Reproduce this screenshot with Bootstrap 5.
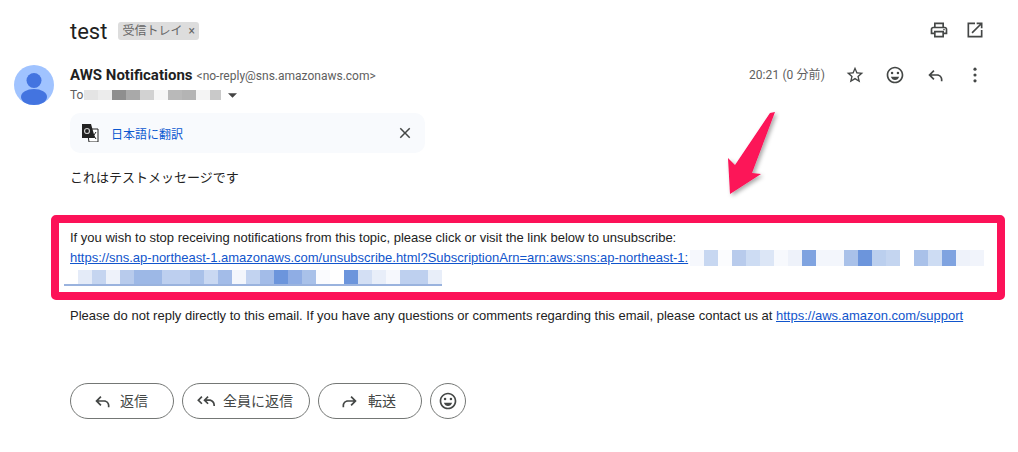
<!doctype html>
<html lang="ja">
<head>
<meta charset="utf-8">
<title>test</title>
<link href="https://cdn.jsdelivr.net/npm/bootstrap@5.3.0/dist/css/bootstrap.min.css" rel="stylesheet">
<style>
html,body{height:452px;overflow:hidden;background:#fff;}
body{font-family:"Roboto","Noto Sans CJK JP",sans-serif;color:#1f1f1f;font-size:14px;position:relative;}
svg{display:block;}
.mail-shell{padding:0 0 0 14px;}
.subject-row{height:60px;padding:0 33px 0 56px;}
.subject-text{font-size:22px;line-height:28px;margin:3px 11px 0 0;color:#1f1f1f;}
.tray-chip{background:#ddd;color:#666;font-size:12px;line-height:16px;border-radius:3px;padding:1px 4px 1px 4px;height:18px;margin-top:2px;}
.tray-x{font-size:12px;margin-left:6px;}
.act-ico{width:20px;height:20px;color:#444746;flex:none;}
.head-row{height:45px;padding-right:33px;}
.avatar-box{width:40px;height:40px;margin-top:5px;margin-right:16px;flex:none;}
.sender-block{padding-top:5px;}
.sender-name{font-weight:700;font-size:15px;line-height:20px;}
.sender-mail{font-size:12px;color:#5e5e5e;margin-left:4px;}
.recip-row{font-size:12px;color:#5e5e5e;line-height:16px;margin-top:2px;}
.recip-mosaic{margin-left:1px;}
.recip-caret{margin-left:6px;}
.time-text{font-size:12px;line-height:20px;letter-spacing:.1px;color:#5e5e5e;margin-right:20px;}
.head-tools{padding-top:5px;}
.head-icons{gap:20px;}
.translate-bar{width:355px;height:40px;margin:8px 0 0 56px;background:#f8fafd;border-radius:10px;padding:0 11px 0 11px;}
.translate-link{color:#0b57d0;font-size:12px;margin:3px 0 0 12px;text-decoration:none;}
.body-jp{margin:15px 0 0 56px;font-size:13px;line-height:20px;color:#222;}
.notice-frame{width:954px;height:85px;margin:27px 0 0 37px;border:8px solid #fc1258;border-radius:5px;padding:5px 11px 0;}
.mail-text{font-family:"Liberation Sans",Arial,sans-serif;font-size:13px;line-height:20px;color:#222;white-space:nowrap;}
.mail-text a{color:#1155cc;}
.mosaic-inline{display:inline-block;vertical-align:-4px;margin-left:2px;}
.mosaic-wrap{margin:2px 0 0 -6px;}
.footer-text{margin:6px 0 0 56px;}
.reply-row{margin:57px 0 0 56px;gap:8px;}
.pill-btn{height:36px;border:1px solid #747775;border-radius:18px;background:#fff;color:#444746;font-size:14px;line-height:20px;padding:0 4px 0 0;display:flex;align-items:center;justify-content:center;gap:8px;}
.pill-reply{width:104px;}
.pill-all{width:128px;}
.pill-fwd{width:104px;}
.pill-emoji{width:36px;padding:0;}
.arrow-over{position:absolute;left:726px;top:108px;}
</style>
</head>
<body>
<div class="mail-shell">
  <div class="subject-row d-flex align-items-center">
    <span class="subject-text">test</span>
    <span class="tray-chip d-inline-flex align-items-center">受信トレイ<span class="tray-x">×</span></span>
    <div class="ms-auto d-flex gap-3">
      <svg class="act-ico" viewBox="0 0 24 24" fill="currentColor"><path d="M19 8h-1V3H6v5H5c-1.66 0-3 1.34-3 3v6h4v4h12v-4h4v-6c0-1.66-1.34-3-3-3zM8 5h8v3H8V5zm8 14H8v-4h8v4zm2-4v-2H6v2H4v-4c0-.55.45-1 1-1h14c.55 0 1 .45 1 1v4h-2z"/><circle cx="18" cy="11.5" r="1"/></svg>
      <svg class="act-ico" viewBox="0 0 24 24" fill="currentColor"><path d="M19 19H5V5h7V3H3v18h18v-9h-2v7zM14 3v2h3.59l-9.83 9.83 1.41 1.41L19 6.41V10h2V3h-7z"/></svg>
    </div>
  </div>
  <div class="head-row d-flex">
    <svg class="avatar-box" viewBox="0 0 40 40"><circle cx="20" cy="20" r="20" fill="#a0c3ff"/><circle cx="20" cy="15.5" r="7.5" fill="#4374e0"/><ellipse cx="20" cy="32" rx="13" ry="8" fill="#4374e0"/></svg>
    <div class="sender-block">
      <div class="d-flex align-items-baseline"><span class="sender-name">AWS Notifications</span><span class="sender-mail">&lt;no-reply@sns.amazonaws.com&gt;</span></div>
      <div class="recip-row d-flex align-items-center">To
        <svg class="recip-mosaic" width="138" height="10" viewBox="0 0 138 10"><rect x="0" width="14" height="10" fill="#e4e4e4"/><rect x="14" width="14" height="10" fill="#ececec"/><rect x="28" width="14" height="10" fill="#8e8e8e"/><rect x="42" width="14" height="10" fill="#a9a9a9"/><rect x="56" width="14" height="10" fill="#d2d2d2"/><rect x="70" width="14" height="10" fill="#f6f6f6"/><rect x="84" width="14" height="10" fill="#b9b9b9"/><rect x="98" width="14" height="10" fill="#b4b4b4"/><rect x="112" width="14" height="10" fill="#f4f4f4"/><rect x="126" width="11" height="10" fill="#c9c9c9"/></svg>
        <svg class="recip-caret" width="9" height="5" viewBox="0 0 10 5"><path d="M0 0h10L5 5z" fill="#444"/></svg>
      </div>
    </div>
    <div class="ms-auto d-flex align-items-start head-tools">
      <span class="time-text">20:21 (0 分前)</span>
      <div class="d-flex head-icons">
        <svg class="act-ico" viewBox="0 0 24 24" fill="currentColor"><path d="M22 9.24l-7.19-.62L12 2 9.19 8.63 2 9.24l5.46 4.73L5.82 21 12 17.27 18.18 21l-1.63-7.03L22 9.24zM12 15.4l-3.76 2.27 1-4.28-3.32-2.88 4.38-.38L12 6.1l1.71 4.04 4.38.38-3.32 2.88 1 4.28L12 15.4z"/></svg>
        <svg class="act-ico" viewBox="0 0 24 24" fill="currentColor"><path d="M12 2C6.48 2 2 6.48 2 12s4.48 10 10 10 10-4.48 10-10S17.52 2 12 2zm0 18c-4.41 0-8-3.59-8-8s3.59-8 8-8 8 3.59 8 8-3.59 8-8 8z"/><circle cx="15.5" cy="9.5" r="1.5"/><circle cx="8.5" cy="9.5" r="1.5"/><path d="M12 18c2.28 0 4.22-1.66 5-4H7c.78 2.34 2.72 4 5 4z"/></svg>
        <svg class="act-ico" viewBox="0 0 24 24" fill="currentColor"><path d="M21 17.5v2h-2v-2c0-2.5-2-4.5-4.5-4.5H7.83l3.58 3.59L10 18l-6-6 6-6 1.41 1.41L7.83 11h6.67c3.6 0 6.5 2.9 6.5 6.500z"/></svg>
        <svg class="act-ico" viewBox="0 0 24 24" fill="currentColor"><circle cx="12" cy="5" r="1.900"/><circle cx="12" cy="12" r="1.900"/><circle cx="12" cy="19" r="1.900"/></svg>
      </div>
    </div>
  </div>
  <div class="translate-bar d-flex align-items-center">
    <svg width="18" height="18" viewBox="0 0 18 18"><path d="M6 5h11v13H8z" fill="#fff" stroke="#222" stroke-width="1"/><path d="M1 0h9l4 14H1z" fill="#222"/><circle cx="6" cy="7" r="2.500" fill="none" stroke="#ccc" stroke-width="1.200"/><path d="M11 9l4 6M15 8l-4 6" stroke="#222" stroke-width="1" fill="none"/></svg>
    <a class="translate-link" href="#">日本語に翻訳</a>
    <svg class="ms-auto" width="18" height="18" viewBox="0 0 24 24" fill="#444746"><path d="M19 6.410L17.590 5 12 10.590 6.410 5 5 6.410 10.590 12 5 17.590 6.410 19 12 13.410 17.590 19 19 17.590 13.410 12z"/></svg>
  </div>
  <div class="body-jp">これはテストメッセージです</div>
  <div class="notice-frame mail-text">
    <div>If you wish to stop receiving notifications from this topic, please click or visit the link below to unsubscribe:</div>
    <div><a href="#">https://sns.ap-northeast-1.amazonaws.com/unsubscribe.html?SubscriptionArn=arn:aws:sns:ap-northeast-1:</a><svg class="mosaic-inline" width="296" height="16" viewBox="0 0 296 16"><rect width="14" height="16" fill="#f6f8fd"/><rect x="14" width="14" height="16" fill="#c7d7f1"/><rect x="28" width="14" height="16" fill="#fbfcfe"/><rect x="42" width="14" height="16" fill="#b8cbec"/><rect x="56" width="14" height="16" fill="#cddcf3"/><rect x="70" width="14" height="16" fill="#dce6f6"/><rect x="84" width="14" height="16" fill="#f7f9fd"/><rect x="98" width="14" height="16" fill="#eef2fa"/><rect x="112" width="14" height="16" fill="#7fa3e0"/><rect x="126" width="14" height="16" fill="#f3f6fc"/><rect x="140" width="14" height="16" fill="#f3f6fc"/><rect x="154" width="14" height="16" fill="#a9c1e9"/><rect x="168" width="14" height="16" fill="#6c95dc"/><rect x="182" width="14" height="16" fill="#bbcfee"/><rect x="196" width="14" height="16" fill="#c4d5f0"/><rect x="210" width="14" height="16" fill="#fff"/><rect x="224" width="14" height="16" fill="#a9c1e9"/><rect x="238" width="14" height="16" fill="#cddcf3"/><rect x="252" width="14" height="16" fill="#7fa3e0"/><rect x="266" width="14" height="16" fill="#eef2fa"/><rect x="280" width="14" height="16" fill="#f1f4fb"/></svg></div>
    <svg class="mosaic-wrap" width="380" height="16" viewBox="0 0 380 16"><rect x="0" y="14" width="378" height="2" fill="#9ab3de"/><rect x="14" width="14" height="14" fill="#e4ebf8"/><rect x="28" width="14" height="14" fill="#c5d5f0"/><rect x="42" width="14" height="14" fill="#eef2fa"/><rect x="56" width="14" height="14" fill="#b8cbec"/><rect x="70" width="28" height="14" fill="#9db8e6"/><rect x="98" width="28" height="14" fill="#bdcfef"/><rect x="126" width="14" height="14" fill="#a9c1e9"/><rect x="140" width="14" height="14" fill="#c9d8f2"/><rect x="154" width="14" height="14" fill="#a3bce8"/><rect x="168" width="14" height="14" fill="#f3f6fc"/><rect x="182" width="14" height="14" fill="#c2d3f0"/><rect x="196" width="14" height="14" fill="#a3bce8"/><rect x="210" width="14" height="14" fill="#6c95dc"/><rect x="224" width="14" height="14" fill="#8fade4"/><rect x="238" width="14" height="14" fill="#a9c1e9"/><rect x="252" width="14" height="14" fill="#fafbfe"/><rect x="266" width="14" height="14" fill="#fff"/><rect x="280" width="14" height="14" fill="#6c95dc"/><rect x="294" width="14" height="14" fill="#d3dff4"/><rect x="308" width="14" height="14" fill="#e8eef9"/><rect x="322" width="14" height="14" fill="#f6f8fd"/><rect x="336" width="28" height="14" fill="#bed0ef"/><rect x="364" width="14" height="14" fill="#e8eef9"/></svg>
  </div>
  <div class="footer-text mail-text">Please do not reply directly to this email. If you have any questions or comments regarding this email, please contact us at <a href="#">https://aws.amazon.com/support</a></div>
  <div class="reply-row d-flex">
    <button class="btn pill-btn pill-reply"><svg width="20" height="20" viewBox="0 0 24 24" fill="#444746"><path d="M21 17.500v2h-2v-2c0-2.500-2-4.500-4.500-4.500H7.830l3.580 3.590L10 18l-6-6 6-6 1.410 1.410L7.830 11h6.670c3.600 0 6.500 2.900 6.500 6.500z"/></svg>返信</button>
    <button class="btn pill-btn pill-all"><svg width="20" height="20" viewBox="0 0 24 24" fill="#444746"><path d="M22 18v-1c0-2.760-2.240-5-5-5h-3.170l2.580 2.590L15 16l-5-5 5-5 1.410 1.410L13.830 10H17c3.870 0 7 3.130 7 7v1z"/><path d="M9 7.410L7.590 6l-5 5 5 5L9 14.590 5.410 11z"/></svg>全員に返信</button>
    <button class="btn pill-btn pill-fwd"><svg width="20" height="20" viewBox="0 0 24 24" fill="#444746"><path d="M3 17.500v2h2v-2c0-2.500 2-4.500 4.500-4.500h6.670l-3.580 3.590L14 18l6-6-6-6-1.410 1.410L16.170 11H9.500C5.900 11 3 13.900 3 17.500z"/></svg>転送</button>
    <button class="btn pill-btn pill-emoji"><svg width="20" height="20" viewBox="0 0 24 24" fill="#444746"><path d="M12 2C6.480 2 2 6.480 2 12s4.480 10 10 10 10-4.480 10-10S17.520 2 12 2zm0 18c-4.410 0-8-3.590-8-8s3.590-8 8-8 8 3.590 8 8-3.590 8-8 8z"/><circle cx="15.500" cy="9.500" r="1.500"/><circle cx="8.500" cy="9.500" r="1.500"/><path d="M12 18c2.280 0 4.220-1.660 5-4H7c.78 2.340 2.720 4 5 4z"/></svg></button>
  </div>
</div>
<svg class="arrow-over" width="54" height="92" viewBox="0 0 54 92"><defs><filter id="sh" x="-30%" y="-30%" width="160%" height="160%"><feDropShadow dx="2" dy="2" stdDeviation="2" flood-color="#000" flood-opacity=".35"/></filter></defs><path d="M44 5L49 4L26 65L35 66L4 86L2 50L9 57z" fill="#fc1258" filter="url(#sh)"/></svg>
<script src="https://cdn.jsdelivr.net/npm/bootstrap@5.3.0/dist/js/bootstrap.bundle.min.js"></script>
</body>
</html>
